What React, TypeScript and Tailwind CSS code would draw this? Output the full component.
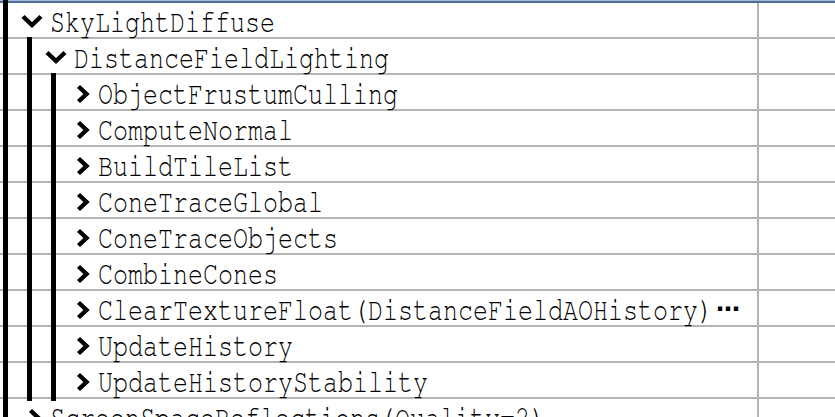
import React from 'react';

type Row = { depth: number; open: boolean; label: string; more?: boolean };

const rows: Row[] = [
    { depth: 0, open: true, label: 'SkyLightDiffuse' },
    { depth: 1, open: true, label: 'DistanceFieldLighting' },
    { depth: 2, open: false, label: 'ObjectFrustumCulling' },
    { depth: 2, open: false, label: 'ComputeNormal' },
    { depth: 2, open: false, label: 'BuildTileList' },
    { depth: 2, open: false, label: 'ConeTraceGlobal' },
    { depth: 2, open: false, label: 'ConeTraceObjects' },
    { depth: 2, open: false, label: 'CombineCones' },
    { depth: 2, open: false, label: 'ClearTextureFloat(DistanceFieldAOHistory)', more: true },
    { depth: 2, open: false, label: 'UpdateHistory' },
    { depth: 2, open: false, label: 'UpdateHistoryStability' },
    { depth: 0, open: false, label: 'ScreenSpaceReflections(Quality=2)' },
];

const barLeft = ['left-[3px]', 'left-[27px]', 'left-[51px]'];
const indent = ['pl-0', 'pl-[24px]', 'pl-[48px]'];

function Chevron({ open }: { open: boolean }) {
    if (open) {
        return (
            <svg width="22" height="14" viewBox="0 0 22 14" className="mr-[7px] mt-[2px] shrink-0">
                <polyline points="2,2.5 11,11 20,2.5" fill="none" stroke="black" strokeWidth="4.4" />
            </svg>
        );
    }
    return (
        <svg width="14" height="20" viewBox="0 0 14 20" className="mr-[8px] mt-[4px] shrink-0">
            <polyline points="2.5,2.5 10.5,10 2.5,17.5" fill="none" stroke="black" strokeWidth="4.4" />
        </svg>
    );
}

function TreeRow({ row }: { row: Row }) {
    return (
        <div className="relative flex h-[36px] border-b-2 border-[#b4b4b4]">
            {/* guide bars for ancestors */}
            {Array.from({ length: row.depth }, (_, i) => i + 1).map((k) => (
                <div key={k} className={`absolute ${barLeft[k]} top-[-2px] bottom-[-4px] w-[5px] bg-black`} />
            ))}
            <div className={`flex w-[759px] items-center border-r-2 border-[#b4b4b4] ${indent[row.depth]}`}>
                <div className="flex w-[50px] shrink-0 items-center justify-end">
                    <Chevron open={row.open} />
                </div>
                <span className="mt-[4px] origin-center scale-y-[1.3] whitespace-nowrap text-[25px] leading-none text-black">
                    {row.label}
                </span>
                {row.more && (
                    <span className="ml-[3px] mt-[2px] text-[24px] font-bold leading-none text-black [font-family:'DejaVu_Sans',sans-serif]">
                        ⋯
                    </span>
                )}
            </div>
            <div className="flex-1" />
        </div>
    );
}

export default function App() {
    return (
        <div
            className="relative h-[417px] w-[835px] overflow-hidden bg-white"
            style={{ fontFamily: '"Nimbus Mono PS", "FreeMono", "Courier New", "Liberation Mono", monospace' }}
        >
            <div className="h-[1px] bg-[#aab8d2]" />
            <div className="h-[2px] bg-[#4d6b9c]" />
            {rows.map((r, i) => (
                <TreeRow key={i} row={r} />
            ))}
            <div className="absolute left-[3px] top-0 bottom-0 w-[5px] bg-black" />
        </div>
    );
}
